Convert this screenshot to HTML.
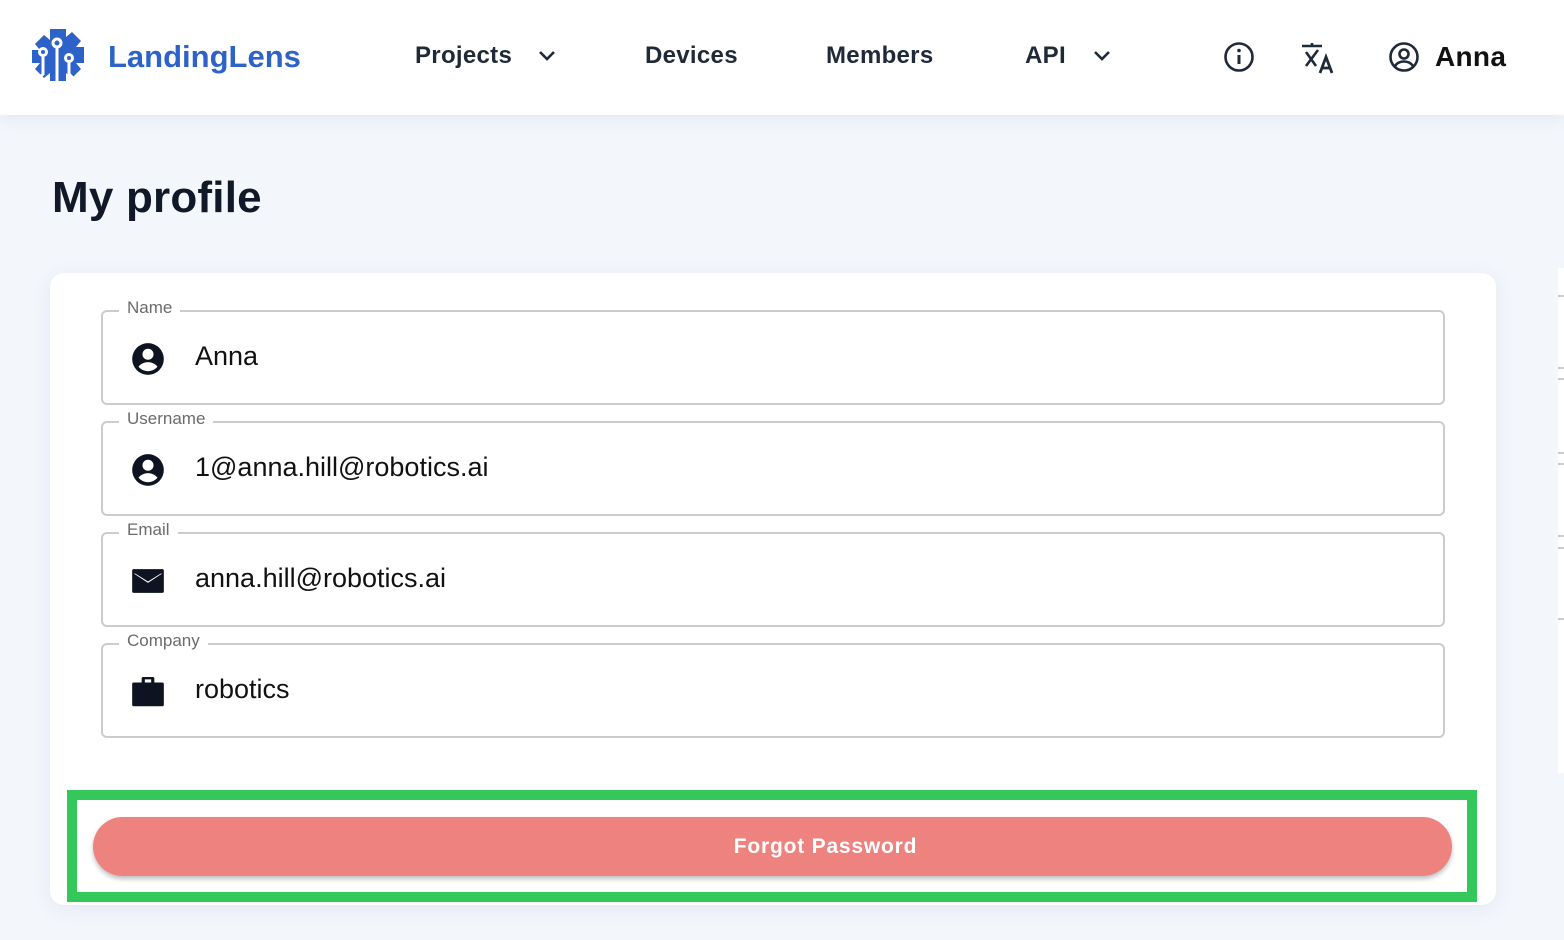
<!DOCTYPE html>
<html><head><meta charset="utf-8"><style>
*{margin:0;padding:0;box-sizing:border-box}
body{width:1564px;height:940px;overflow:hidden;background:#f3f6fb;font-family:"Liberation Sans",sans-serif;position:relative}
.nav{position:absolute;left:0;top:0;width:1564px;height:115px;background:#fff;box-shadow:0 4px 14px rgba(120,140,180,.12)}
.ni{position:absolute;top:42px;font-size:24px;font-weight:bold;color:#1f2937;letter-spacing:.3px}
.title{position:absolute;left:52px;top:173px;font-size:44px;font-weight:bold;color:#111827;letter-spacing:.2px}
.card{position:absolute;left:50px;top:273px;width:1446px;height:632px;background:#fff;border-radius:14px;box-shadow:0 4px 18px rgba(120,140,180,.12)}
.card2{position:absolute;left:1558px;top:268px;width:10px;height:505px;background:#fff}
.card2 i{position:absolute;left:0;width:10px;height:2px;background:#ccc}
.f{position:absolute;left:101px;width:1344px;height:95px;border:2px solid #ccc;border-radius:6px}
.f .l{position:absolute;left:16px;top:-14px;background:#fff;padding:0 8px;font-size:17px;color:#6b6b6b}
.f .v{position:absolute;left:92px;top:29px;font-size:27px;color:#111}
.f svg{position:absolute;left:26px;top:28px}
.green{position:absolute;left:67px;top:790px;width:1410px;height:112px;border:10px solid #34c759}
.btn{position:absolute;left:93px;top:817px;width:1359px;height:59px;border-radius:30px;background:#ee827f;box-shadow:0 3px 5px rgba(0,0,0,.25);color:#fff;font-size:21px;font-weight:bold;text-align:center;line-height:59px;letter-spacing:.8px;padding-left:106px}
</style></head><body>
<div class="nav">
<svg style="position:absolute;left:28px;top:28px" width="60" height="60" viewBox="0 0 60 60">
<path fill="#2d63c8" d="M22 1h16v8l6-5 9 9-5 6h8v16h-8l5 6-9 9-6-5v8H22v-8l-6 5-9-9 5-6H4V22h8l-5-6 9-9 6 5z"/>
<g stroke="#fff" stroke-width="3" fill="none"><circle cx="29" cy="15" r="4"/><path d="M29 19v40"/><circle cx="15" cy="24" r="3.5"/><path d="M15 28v18l-6 6"/><circle cx="41" cy="30" r="3.5"/><path d="M41 34v12l6 6"/></g></svg>
<div style="position:absolute;left:108px;top:39px;font-size:31px;font-weight:bold;color:#2d63c8">LandingLens</div>
<div class="ni" style="left:415px">Projects</div>
<svg style="position:absolute;left:538px;top:49px" width="18" height="14"><path d="M2 3l7 7 7-7" stroke="#1f2937" stroke-width="2.6" fill="none"/></svg>
<div class="ni" style="left:645px">Devices</div>
<div class="ni" style="left:826px">Members</div>
<div class="ni" style="left:1025px">API</div>
<svg style="position:absolute;left:1093px;top:49px" width="18" height="14"><path d="M2 3l7 7 7-7" stroke="#1f2937" stroke-width="2.6" fill="none"/></svg>
<svg style="position:absolute;left:1223px;top:41px" width="32" height="32"><circle cx="16" cy="16" r="13.5" stroke="#1f2937" stroke-width="2.6" fill="none"/><path d="M16 14v9" stroke="#1f2937" stroke-width="3"/><circle cx="16" cy="9.5" r="1.8" fill="#1f2937"/></svg>
<svg style="position:absolute;left:1300px;top:41px" width="36" height="34"><path d="M2 5h20M12 2v3M6 11l10 14M18 9l-12 16" stroke="#1f2937" stroke-width="2.6" fill="none"/><path d="M20 32l6-16 6 16M22 27h8" stroke="#1f2937" stroke-width="2.8" fill="none"/></svg>
<svg style="position:absolute;left:1388px;top:41px" width="32" height="32"><circle cx="16" cy="16" r="13.5" stroke="#1f2937" stroke-width="2.6" fill="none"/><circle cx="16" cy="13" r="4.5" stroke="#1f2937" stroke-width="2.6" fill="none"/><path d="M7 25c4-6 14-6 18 0" stroke="#1f2937" stroke-width="2.6" fill="none"/></svg>
<div class="ni" style="left:1435px;top:41px;font-size:28px;color:#111">Anna</div>
</div>
<div class="title">My profile</div>
<div class="card"></div>
<div class="card2"><i style="top:27px"></i><i style="top:99px"></i><i style="top:110px"></i><i style="top:184px"></i><i style="top:195px"></i><i style="top:267px"></i><i style="top:279px"></i><i style="top:350px"></i></div>
<div class="f" style="top:310px"><span class="l">Name</span><svg width="38" height="38" viewBox="0 0 24 24"><path fill="#0d1321" d="M12 2a10 10 0 100 20 10 10 0 000-20zm0 3.5a3.5 3.5 0 110 7 3.5 3.5 0 010-7zm0 14.2a8 8 0 01-6-2.8c1.5-2 4-2.9 6-2.9s4.5.9 6 2.9a8 8 0 01-6 2.8z"/></svg><span class="v">Anna</span></div>
<div class="f" style="top:421px"><span class="l">Username</span><svg width="38" height="38" viewBox="0 0 24 24"><path fill="#0d1321" d="M12 2a10 10 0 100 20 10 10 0 000-20zm0 3.5a3.5 3.5 0 110 7 3.5 3.5 0 010-7zm0 14.2a8 8 0 01-6-2.8c1.5-2 4-2.9 6-2.9s4.5.9 6 2.9a8 8 0 01-6 2.8z"/></svg><span class="v">1@anna.hill@robotics.ai</span></div>
<div class="f" style="top:532px"><span class="l">Email</span><svg width="38" height="38" viewBox="0 0 24 24"><path fill="#0d1321" d="M3 4.5h18a1 1 0 011 1v13a1 1 0 01-1 1H3a1 1 0 01-1-1v-13a1 1 0 011-1zm.5 2.5v.6l8.5 5.6 8.5-5.6V7l-8.5 5.3z"/></svg><span class="v">anna.hill@robotics.ai</span></div>
<div class="f" style="top:643px"><span class="l">Company</span><svg width="38" height="38" viewBox="0 0 24 24"><path fill="#0d1321" d="M9 2.5h6a1 1 0 011 1V6h5a1 1 0 011 1v13a1 1 0 01-1 1H3a1 1 0 01-1-1V7a1 1 0 011-1h5V3.5a1 1 0 011-1zm1 1.5v2h4V4z"/></svg><span class="v">robotics</span></div>
<div class="green"></div>
<div class="btn">Forgot Password</div>
</body></html>
